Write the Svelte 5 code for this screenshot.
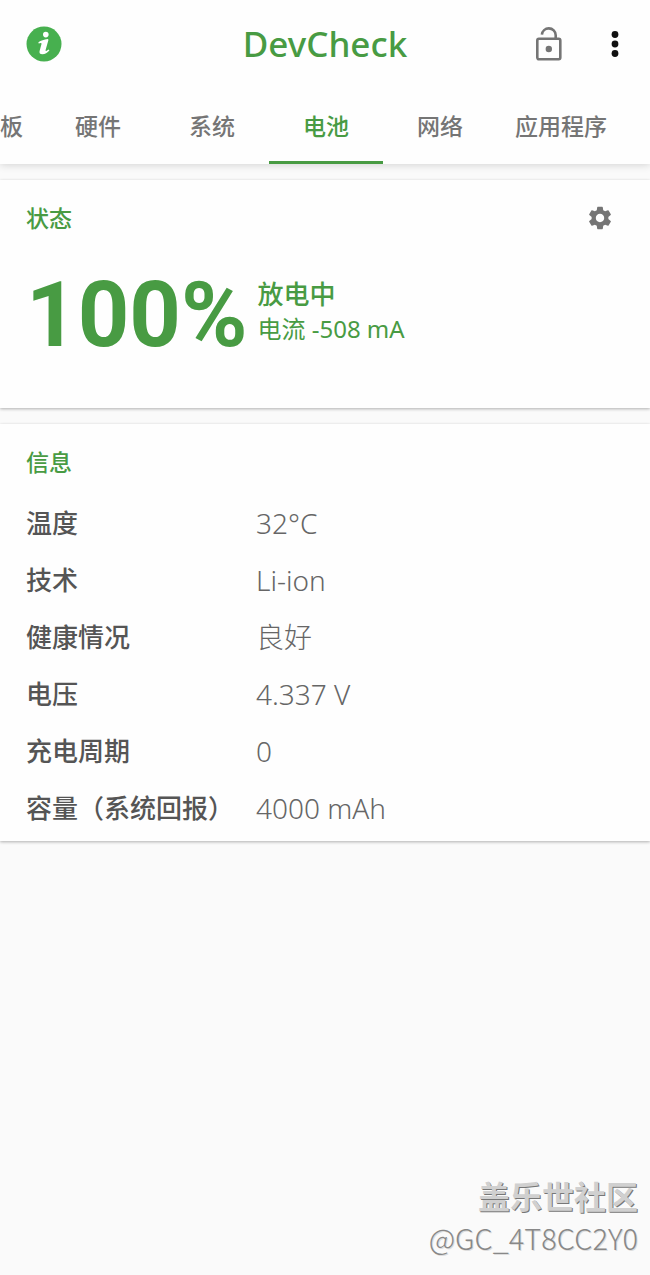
<script lang="ts">
  let active = $state('电池');

  const tabs = ['板', '硬件', '系统', '电池', '网络', '应用程序'];

  const info = [
    { label: '温度', value: '32°C' },
    { label: '技术', value: 'Li-ion' },
    { label: '健康情况', value: '良好' },
    { label: '电压', value: '4.337 V' },
    { label: '充电周期', value: '0' },
    { label: '容量（系统回报）', value: '4000 mAh' }
  ];
</script>

<div class="app">
  <header class="header">
    <div class="toolbar">
      <button class="icon-button" aria-label="info">
        <svg width="36" height="36" viewBox="0 0 36 36">
          <circle cx="18" cy="18" r="17.5" fill="#47b04f" />
          <circle cx="19.8" cy="8.6" r="2.8" fill="#fff" />
          <path d="M12.4 16.3c2.6-1.6 5.600-2.800 9.300-3.200l.8.7-2.900 10.200c-.2.9.3 1.100 1 .7l2.100-1.200.7 1c-2 2.200-4.400 3.700-7 3.700-2.300 0-3.400-1.300-2.800-3.300l1.900-7c.1-.7-.2-.9-.8-.8l-2 .4z" fill="#fff" />
        </svg>
      </button>
      <h1 class="title">DevCheck</h1>
      <div class="actions">
        <button class="icon-button" aria-label="unlock">
          <svg width="28" height="36" viewBox="0 0 28 36" fill="none" stroke="#757575" stroke-width="2.6">
            <rect x="2.3" y="12.8" width="23" height="20.4" rx="1.6" />
            <path d="M6.9 8.6C7.3 4.9 10.2 2.4 13.8 2.4c3.9 0 6.9 2.9 6.9 6.8v3.6" />
            <circle cx="13.8" cy="23" r="3.2" fill="#757575" stroke="none" />
          </svg>
        </button>
        <button class="icon-button" aria-label="menu">
          <svg width="18" height="36" viewBox="0 0 18 36" fill="#111">
            <circle cx="9" cy="8.5" r="3.4" />
            <circle cx="9" cy="18" r="3.4" />
            <circle cx="9" cy="27.5" r="3.4" />
          </svg>
        </button>
      </div>
    </div>
    <nav class="tabs">
      {#each tabs as tab}
        <button class="tab" class:active={active === tab} onclick={() => (active = tab)}>{tab}</button>
      {/each}
    </nav>
  </header>

  <main class="content">
    <section class="card">
      <div class="card-head">
        <h2 class="card-title">状态</h2>
        <button class="icon-button" aria-label="settings">
          <svg width="28" height="28" viewBox="0 0 24 24" fill="#757575">
            <path d="M19.14 12.94c.04-.3.06-.61.06-.94 0-.32-.02-.64-.07-.94l2.03-1.58a.49.49 0 0 0 .12-.61l-1.92-3.32a.488.488 0 0 0-.59-.22l-2.39.96c-.5-.38-1.03-.7-1.62-.94l-.36-2.54a.484.484 0 0 0-.48-.41h-3.84c-.24 0-.43.17-.47.41l-.36 2.54c-.59.24-1.13.57-1.62.94l-2.39-.96c-.22-.08-.47 0-.59.22L2.74 8.87c-.12.21-.08.47.12.61l2.03 1.58c-.05.3-.09.63-.09.94s.02.64.07.94l-2.03 1.58a.49.49 0 0 0-.12.61l1.92 3.32c.12.22.37.29.59.22l2.39-.96c.5.38 1.03.7 1.62.94l.36 2.54c.05.24.24.41.48.41h3.84c.24 0 .44-.17.47-.41l.36-2.54c.59-.24 1.13-.56 1.62-.94l2.39.96c.22.08.47 0 .59-.22l1.92-3.32c.12-.22.07-.47-.12-.61l-2.01-1.58zM12 15.6c-1.98 0-3.6-1.62-3.6-3.6s1.62-3.6 3.6-3.6 3.6 1.62 3.6 3.6-1.62 3.6-3.6 3.6z" />
          </svg>
        </button>
      </div>
      <div class="battery">
        <div class="percent">100%</div>
        <div class="detail">
          <div class="state">放电中</div>
          <div class="current">电流 -508 mA</div>
        </div>
      </div>
    </section>

    <section class="card info">
      <h2 class="card-title">信息</h2>
      <table class="table">
        <tbody>
          {#each info as row}
            <tr>
              <th scope="row">{row.label}</th>
              <td>{row.value}</td>
            </tr>
          {/each}
        </tbody>
      </table>
    </section>
  </main>

  <footer class="footer">
    <div class="community">盖乐世社区</div>
    <div class="user">@GC_4T8CC2Y0</div>
  </footer>
</div>

<style>
  :global(body) {
    background: #fafafa;
  }

  .app {
    --green: #489b43;
    display: flex;
    flex-direction: column;
    min-height: 100vh;
    font-family: 'Noto Sans', 'Noto Sans CJK SC', sans-serif;
    color: #757575;
  }

  h1,
  h2 {
    margin: 0;
  }

  button {
    padding: 0;
    border: none;
    background: none;
    font: inherit;
    color: inherit;
    cursor: pointer;
  }

  .icon-button {
    display: flex;
  }

  .header {
    background: #fefefe;
    box-shadow: 0 1px 8px rgba(0, 0, 0, 0.16);
  }

  .toolbar {
    display: grid;
    grid-template-columns: 1fr auto 1fr;
    align-items: center;
    height: 88px;
    padding: 0 26px;
  }

  .title {
    font-size: 35px;
    font-weight: 500;
    line-height: 48px;
    color: var(--green);
  }

  .actions {
    display: flex;
    justify-content: flex-end;
    gap: 43px;
  }

  .tabs {
    display: flex;
    overflow: hidden;
  }

  .tab {
    flex: none;
    box-sizing: border-box;
    min-width: 114px;
    height: 76px;
    padding: 0 18px;
    border-bottom: 3px solid transparent;
    font-size: 23px;
    font-weight: 500;
  }

  .tab:first-child {
    min-width: 0;
    padding-left: 0;
  }

  .tab.active {
    border-color: var(--green);
    color: var(--green);
  }

  .content {
    display: flex;
    flex-direction: column;
    gap: 16px;
    padding-top: 16px;
  }

  .card {
    padding: 20px 26px 0;
    background: #fefefe;
    box-shadow: 0 1px 3px rgba(0, 0, 0, 0.3);
  }

  .card-head {
    display: flex;
    align-items: center;
    justify-content: space-between;
    padding-right: 10px;
  }

  .card-title {
    font-size: 23px;
    font-weight: 500;
    line-height: 36px;
    color: var(--green);
  }

  .battery {
    display: flex;
    gap: 10px;
    padding: 26px 0 38px;
    color: var(--green);
  }

  .percent {
    font-family: Roboto, sans-serif;
    font-size: 90px;
    font-weight: 700;
    line-height: 108px;
  }

  .detail {
    padding-top: 14px;
  }

  .state {
    font-size: 26px;
    font-weight: 500;
    line-height: 36px;
  }

  .current {
    font-size: 24px;
    line-height: 34px;
  }

  .info {
    padding-bottom: 5px;
  }

  .table {
    width: 100%;
    margin-top: 14px;
    border-collapse: collapse;
    table-layout: fixed;
    font-size: 26px;
  }

  th,
  td {
    height: 57px;
    padding: 0;
    text-align: left;
    line-height: 36px;
    white-space: nowrap;
  }

  th {
    width: 230px;
    font-weight: 500;
    color: #555;
  }

  td {
    font-size: 28px;
    font-weight: 300;
    color: #666;
  }

  .footer {
    margin-top: auto;
    padding: 0 12px 20px;
    text-align: right;
  }

  .community {
    font-size: 32px;
    font-weight: 700;
    line-height: 44px;
    color: #d0d0d0;
    text-shadow: 1px 1px 0 #777;
  }

  .user {
    font-family: 'Noto Sans CJK SC', sans-serif;
    font-size: 29px;
    font-weight: 300;
    line-height: 36px;
    color: #888;
    text-shadow: 1px 1px 0 #ddd;
  }
</style>
